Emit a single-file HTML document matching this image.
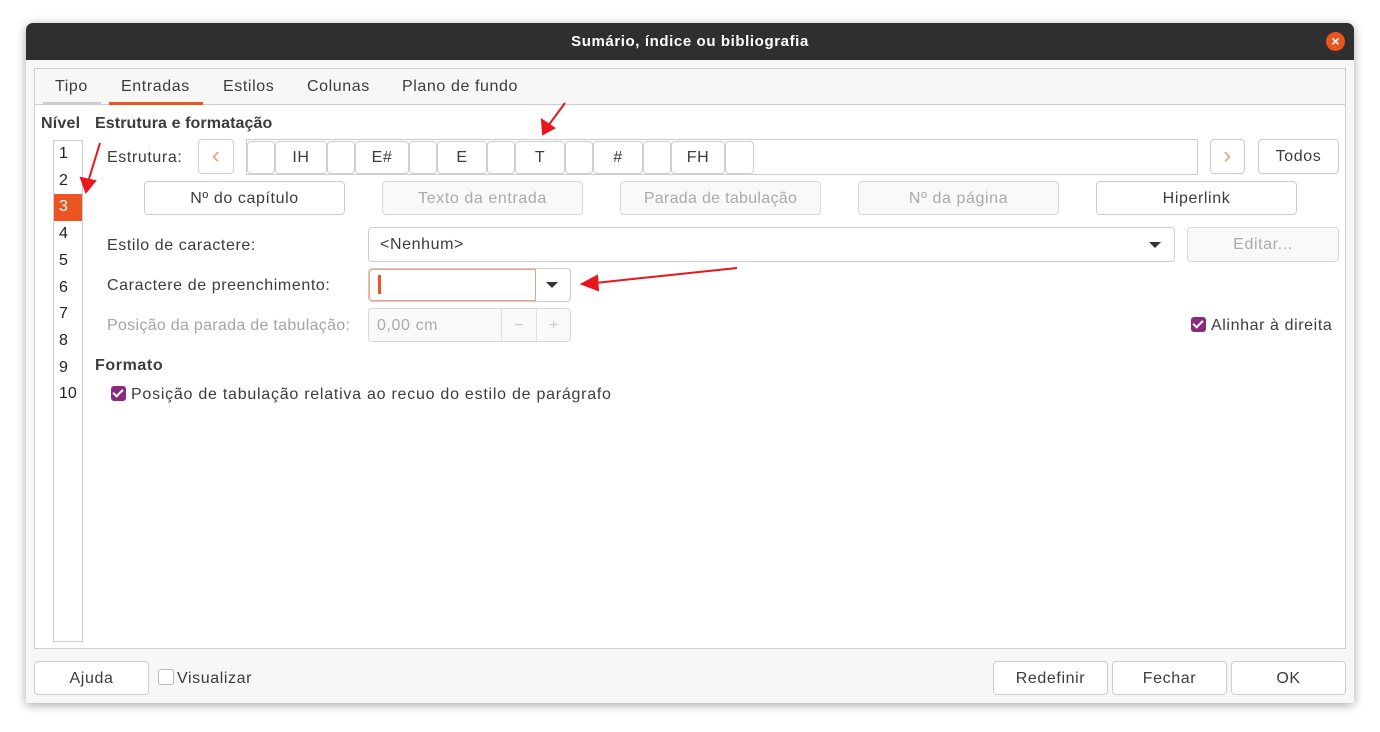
<!DOCTYPE html>
<html><head><meta charset="utf-8"><style>
*{box-sizing:border-box;margin:0;padding:0}
body{width:1380px;height:732px;background:#fff;font-family:"Liberation Sans",sans-serif;font-size:16px;letter-spacing:0.6px;color:#3c3c3c;position:relative;overflow:hidden}
.a{position:absolute}
.dlg{left:26px;top:23px;width:1328px;height:680px;background:#f7f7f7;border-radius:7px 7px 0 0;box-shadow:0 2px 10px rgba(0,0,0,.35);overflow:hidden}
.title{left:0;top:0;width:1328px;height:37px;background:#302f30;color:#fff;font-weight:bold;text-align:center;line-height:37px;font-size:15px}
.btn{position:absolute;border:1px solid #cdcdcd;border-radius:4px;background:#fff;text-align:center;color:#3c3c3c}
.dis{background:#f9f9f9;color:#aaa;border-color:#d8d8d8}
.cell{position:absolute;top:1px;height:33px;border:1px solid #cfcfcf;border-radius:4px;background:#fff;text-align:center;line-height:31px}
.chk{position:absolute;width:15px;height:15px;border-radius:3px;background:#8a2a7d}
.chk:after{content:"";position:absolute;left:4px;top:1px;width:4px;height:8px;border:solid #fff;border-width:0 2px 2px 0;transform:rotate(45deg)}
</style></head><body>
<div class="a dlg">
<div class="a title">Sumário, índice ou bibliografia</div>
<div class="a" style="left:1300px;top:9px;width:19px;height:19px;border-radius:50%;background:#e95420;color:#fff;font-size:14px;line-height:19px;text-align:center;font-weight:bold;letter-spacing:0">×</div>
<div class="a" style="left:8px;top:45px;width:1312px;height:581px;border:1px solid #cdcdcd;background:#fff"></div>
<div class="a" style="left:9px;top:46px;width:1310px;height:36px;background:#f7f7f7;border-bottom:1px solid #cdcdcd"></div>
<div class="a" style="left:29px;top:55px">Tipo</div>
<div class="a" style="left:17px;top:79px;width:58px;height:3px;background:#cdcdcd"></div>
<div class="a" style="left:95px;top:55px">Entradas</div>
<div class="a" style="left:83px;top:79px;width:94px;height:3px;background:#e95420"></div>
<div class="a" style="left:197px;top:55px">Estilos</div>
<div class="a" style="left:281px;top:55px">Colunas</div>
<div class="a" style="left:376px;top:55px">Plano de fundo</div>

<div class="a" style="left:15px;top:92px;font-weight:bold;letter-spacing:0.2px">Nível</div>
<div class="a" style="left:69px;top:92px;font-weight:bold;letter-spacing:0.1px">Estrutura e formatação</div>
<div class="a" style="left:27px;top:117px;width:30px;height:502px;border:1px solid #cdcdcd;background:#fff;line-height:26.7px;font-size:16px;letter-spacing:0;color:#222">
<div style="padding-left:5px">1</div><div style="padding-left:5px">2</div><div style="padding-left:5px;background:#e95420;color:#fff">3</div><div style="padding-left:5px">4</div><div style="padding-left:5px">5</div><div style="padding-left:5px">6</div><div style="padding-left:5px">7</div><div style="padding-left:5px">8</div><div style="padding-left:5px">9</div><div style="padding-left:5px">10</div></div>

<div class="a" style="left:81px;top:126px">Estrutura:</div>
<div class="btn" style="left:172px;top:116px;width:36px;height:35px;color:#f0a080;line-height:31px;font-size:24px">‹</div>
<div class="a" style="left:220px;top:116px;width:952px;height:36px;border:1px solid #cdcdcd;background:#fff">
<div class="cell" style="left:0;width:28px"></div>
<div class="cell" style="left:28px;width:52px">IH</div>
<div class="cell" style="left:80px;width:28px"></div>
<div class="cell" style="left:108px;width:54px">E#</div>
<div class="cell" style="left:162px;width:28px"></div>
<div class="cell" style="left:190px;width:50px">E</div>
<div class="cell" style="left:240px;width:28px"></div>
<div class="cell" style="left:268px;width:50px">T</div>
<div class="cell" style="left:318px;width:28px"></div>
<div class="cell" style="left:346px;width:50px">#</div>
<div class="cell" style="left:396px;width:28px"></div>
<div class="cell" style="left:424px;width:54px">FH</div>
<div class="cell" style="left:478px;width:29px"></div>
</div>
<div class="btn" style="left:1184px;top:116px;width:35px;height:35px;color:#f0a080;line-height:31px;font-size:24px">›</div>
<div class="btn" style="left:1232px;top:116px;width:81px;height:35px;line-height:34px">Todos</div>

<div class="btn" style="left:118px;top:158px;width:201px;height:34px;line-height:33px">Nº do capítulo</div>
<div class="btn dis" style="left:356px;top:158px;width:201px;height:34px;line-height:33px">Texto da entrada</div>
<div class="btn dis" style="left:594px;top:158px;width:201px;height:34px;line-height:33px;letter-spacing:0.3px">Parada de tabulação</div>
<div class="btn dis" style="left:832px;top:158px;width:201px;height:34px;line-height:33px">Nº da página</div>
<div class="btn" style="left:1070px;top:158px;width:201px;height:34px;line-height:33px">Hiperlink</div>

<div class="a" style="left:81px;top:214px">Estilo de caractere:</div>
<div class="btn" style="left:342px;top:204px;width:807px;height:35px;text-align:left;padding-left:11px;line-height:34px">&lt;Nenhum&gt;</div>
<div class="a" style="left:1123px;top:219px;border:6px solid transparent;border-top:6px solid #333;border-bottom:0"></div>
<div class="btn dis" style="left:1161px;top:204px;width:152px;height:35px;line-height:34px">Editar...</div>

<div class="a" style="left:81px;top:254px">Caractere de preenchimento:</div>
<div class="btn" style="left:342px;top:245px;width:203px;height:34px"></div>
<div class="a" style="left:343px;top:246px;width:167px;height:32px;border:1px solid #f0a080;border-radius:4px 0 0 4px"></div>
<div class="a" style="left:352px;top:252px;width:3px;height:19px;background:#e95420"></div>
<div class="a" style="left:520px;top:259px;border:6px solid transparent;border-top:6px solid #333;border-bottom:0"></div>

<div class="a" style="left:81px;top:294px;color:#a5a5a5;letter-spacing:0.3px">Posição da parada de tabulação:</div>
<div class="btn dis" style="left:342px;top:285px;width:203px;height:34px;text-align:left;padding-left:8px;line-height:33px">0,00 cm
<span class="a" style="left:132px;top:0;width:35px;height:32px;border-left:1px solid #e0e0e0;text-align:center;color:#ccc">−</span>
<span class="a" style="left:167px;top:0;width:35px;height:32px;border-left:1px solid #e0e0e0;text-align:center;color:#ccc">+</span></div>

<div class="chk" style="left:1165px;top:294px"></div>
<div class="a" style="left:1185px;top:294px">Alinhar à direita</div>

<div class="a" style="left:69px;top:334px;font-weight:bold">Formato</div>
<div class="chk" style="left:85px;top:363px"></div>
<div class="a" style="left:105px;top:363px;letter-spacing:0.75px">Posição de tabulação relativa ao recuo do estilo de parágrafo</div>

<div class="btn" style="left:8px;top:638px;width:115px;height:34px;line-height:33px">Ajuda</div>
<div class="a" style="left:132px;top:646px;width:16px;height:16px;border:1px solid #bbb;border-radius:3px;background:#fff"></div>
<div class="a" style="left:151px;top:647px">Visualizar</div>
<div class="btn" style="left:967px;top:638px;width:115px;height:34px;line-height:33px">Redefinir</div>
<div class="btn" style="left:1086px;top:638px;width:115px;height:34px;line-height:33px">Fechar</div>
<div class="btn" style="left:1205px;top:638px;width:115px;height:34px;line-height:33px">OK</div>
</div>
<svg class="a" style="left:0;top:0" width="1380" height="732">
<g stroke="#e8171b" stroke-width="2" fill="#e8171b">
<line x1="565" y1="103" x2="548" y2="126"/><polygon points="543,134 542,120 554,128"/>
<line x1="100" y1="143" x2="88" y2="182"/><polygon points="86,192 81,178 95,181"/>
<line x1="737" y1="268" x2="595" y2="283"/><polygon points="582,284 597,276 598,290"/>
</g></svg>
</body></html>
